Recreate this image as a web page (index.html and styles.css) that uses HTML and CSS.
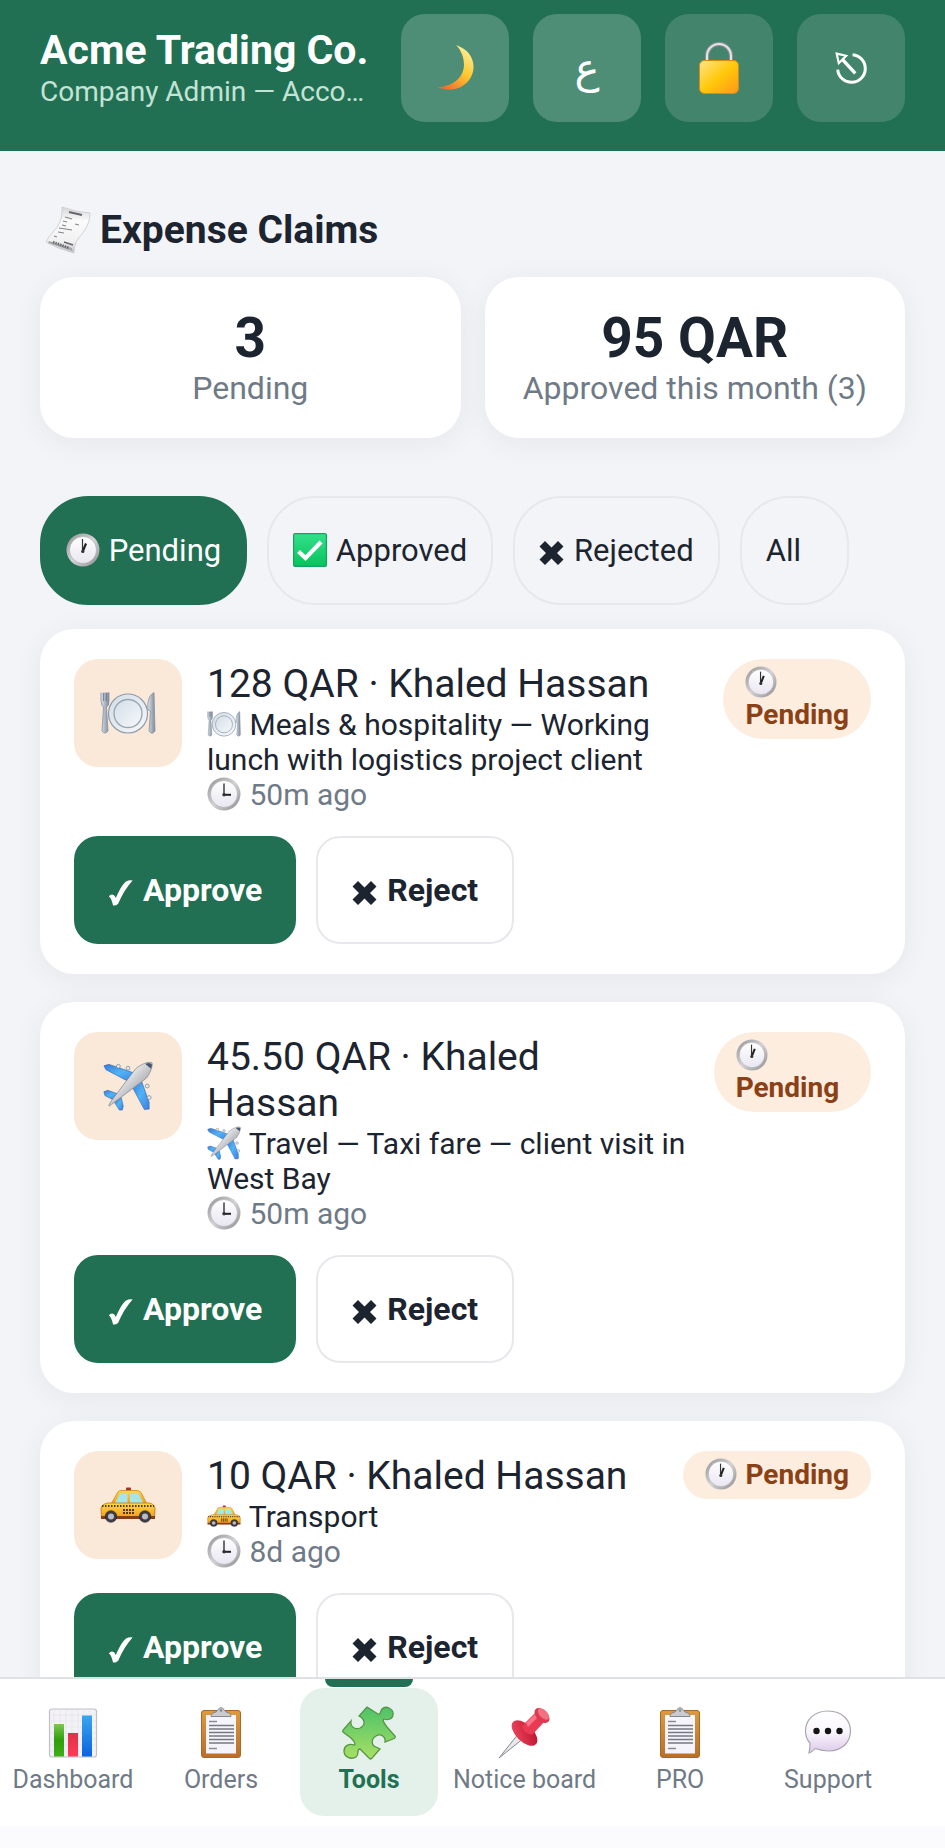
FILE: index.html
```html
<!DOCTYPE html>
<html lang="en">
<head>
<meta charset="utf-8">
<meta name="viewport" content="width=device-width, initial-scale=1">
<title>Expense Claims</title>
<link rel="stylesheet" href="styles.css">
</head>
<body>
<svg class="sprite" aria-hidden="true">
  <defs>
    <linearGradient id="g-moon" x1="0.8" y1="0" x2="0.2" y2="1"><stop offset="0" stop-color="#fff3a0"/><stop offset="0.5" stop-color="#fdc62d"/><stop offset="1" stop-color="#ee6a2c"/></linearGradient>
    <linearGradient id="g-lock" x1="0" y1="0" x2="1" y2="1"><stop offset="0" stop-color="#ffe48a"/><stop offset="0.5" stop-color="#ffc90a"/><stop offset="1" stop-color="#ff9518"/></linearGradient>
    <linearGradient id="g-paper" x1="0" y1="0" x2="0" y2="1"><stop offset="0" stop-color="#d6d6d9"/><stop offset="0.3" stop-color="#fbfbfb"/><stop offset="0.75" stop-color="#f1f1f2"/><stop offset="1" stop-color="#c3c3c8"/></linearGradient>
    <linearGradient id="g-rim" x1="0" y1="0" x2="1" y2="1"><stop offset="0" stop-color="#8f8f92"/><stop offset="0.5" stop-color="#d4d4d6"/><stop offset="1" stop-color="#8a8a8d"/></linearGradient>
    <linearGradient id="g-face" x1="0" y1="0" x2="0" y2="1"><stop offset="0" stop-color="#ffffff"/><stop offset="1" stop-color="#e9e6f1"/></linearGradient>
    <linearGradient id="g-check" x1="0" y1="0" x2="0" y2="1"><stop offset="0" stop-color="#35e08a"/><stop offset="1" stop-color="#05c45c"/></linearGradient>
    <linearGradient id="g-steel" x1="0" y1="0" x2="1" y2="0"><stop offset="0" stop-color="#dde3ea"/><stop offset="1" stop-color="#7d8998"/></linearGradient>
    <linearGradient id="g-plate" x1="0" y1="0" x2="1" y2="1"><stop offset="0" stop-color="#d3dde7"/><stop offset="1" stop-color="#f7f9fb"/></linearGradient>
    <linearGradient id="g-wing" x1="0" y1="0" x2="1" y2="1"><stop offset="0" stop-color="#3b78d8"/><stop offset="0.5" stop-color="#4fb4f7"/><stop offset="1" stop-color="#3f7ee0"/></linearGradient>
    <linearGradient id="g-body" x1="0" y1="0" x2="1" y2="1"><stop offset="0.3" stop-color="#f4f4f5"/><stop offset="0.7" stop-color="#a5a7ad"/></linearGradient>
    <linearGradient id="g-taxi" x1="0" y1="0" x2="0" y2="1"><stop offset="0" stop-color="#ffd84a"/><stop offset="1" stop-color="#f39a1a"/></linearGradient>
    <linearGradient id="g-puzzle" x1="0" y1="0" x2="0" y2="1"><stop offset="0" stop-color="#4cc268"/><stop offset="1" stop-color="#a9e064"/></linearGradient>
    <linearGradient id="g-pin" x1="0" y1="0" x2="1" y2="1"><stop offset="0" stop-color="#f24a60"/><stop offset="1" stop-color="#b80f2c"/></linearGradient>
    <linearGradient id="g-board" x1="0" y1="0" x2="0" y2="1"><stop offset="0" stop-color="#dd9a3e"/><stop offset="1" stop-color="#b96e2c"/></linearGradient>
    <linearGradient id="g-bubble" x1="0" y1="0" x2="0" y2="1"><stop offset="0" stop-color="#ffffff"/><stop offset="0.5" stop-color="#faf6fc"/><stop offset="1" stop-color="#dcc9ea"/></linearGradient>
    <linearGradient id="g-green" x1="0" y1="0" x2="0" y2="1"><stop offset="0" stop-color="#7cc653"/><stop offset="0.5" stop-color="#2f9e0b"/><stop offset="1" stop-color="#3fae18"/></linearGradient>
    <linearGradient id="g-red" x1="0" y1="0" x2="0" y2="1"><stop offset="0" stop-color="#e03048"/><stop offset="1" stop-color="#ff3b57"/></linearGradient>
    <linearGradient id="g-blue" x1="0" y1="0" x2="0" y2="1"><stop offset="0" stop-color="#3aa6ee"/><stop offset="1" stop-color="#0a63e0"/></linearGradient>
  </defs>

  <symbol id="i-moon" viewBox="0 0 48 48"><path d="M25 1C37 5 43 14 42.500 24C41.500 40 24 51 6 43C20 43 32.500 35 33 21C33 13 30 6 25 1Z" fill="url(#g-moon)"/></symbol>

  <symbol id="i-lock" viewBox="0 0 48 54"><path d="M12 20V15a12 12 0 0 1 24 0V20" fill="none" stroke="#8f9194" stroke-width="4"/><path d="M12 20V15a12 12 0 0 1 24 0V20" fill="none" stroke="#e2e3e5" stroke-width="2"/><rect x="4.500" y="19.500" width="39" height="33" rx="5" fill="url(#g-lock)" stroke="#d98a10"/></symbol>

  <symbol id="i-exit" viewBox="0 0 32 32"><path d="M17.500 3.500A13 13 0 1 1 3.500 17.500" fill="none" stroke="#fff" stroke-width="2.800"/><path d="M20 21L7 7" stroke="#fff" stroke-width="3.200" fill="none"/><path d="M2.500 2.500L11.500 4.500L4.500 11.500Z" fill="#42856c" stroke="#fff" stroke-width="2"/></symbol>

  <symbol id="i-receipt" viewBox="0 0 46 48"><path d="M17 1Q30 6 45 7C45 18 39 26 33 33C30 37 29 42 29 47Q13 43 1 36C4 28 12 24 15 16C17 11 17 6 17 1Z" fill="url(#g-paper)" stroke="#c9c9cd" stroke-width="0.800"/><path d="M24 6L37 9" stroke="#66676d" stroke-width="2.200"/><path d="M20 11L27 13M18 15L22 16M30 18L34 19M17 19L21 20M14 22L27 24M13 26L19 27M9 30L12 31" stroke="#85868c" stroke-width="1.200"/><path d="M19 36L28 39" stroke="#66676d" stroke-width="1.500"/><path d="M4 35L27 42L27.500 45L3 37Z" fill="#a6a6ad"/><path d="M8 36L24 42" stroke="#6a6a71" stroke-width="2.600" stroke-dasharray="1.500 1"/></symbol>

  <symbol id="i-clock1" viewBox="0 0 34 34"><circle cx="17" cy="17" r="16.500" fill="url(#g-rim)"/><circle cx="17" cy="17" r="13.500" fill="url(#g-face)" stroke="#a6a6aa" stroke-width="0.600"/><path d="M16.500 18.500V6" stroke="#333" stroke-width="1.200"/><path d="M16.500 19L20 10.500" stroke="#222" stroke-width="2.200"/><circle cx="16.800" cy="18.500" r="1.600" fill="#333"/></symbol>

  <symbol id="i-clock3" viewBox="0 0 34 34"><circle cx="17" cy="17" r="16.500" fill="url(#g-rim)"/><circle cx="17" cy="17" r="13.500" fill="url(#g-face)" stroke="#a6a6aa" stroke-width="0.600"/><path d="M17 18V6.500" stroke="#222" stroke-width="1.300"/><path d="M16.500 17.800H24" stroke="#222" stroke-width="2"/><circle cx="17" cy="17.800" r="1.700" fill="#333"/></symbol>

  <symbol id="i-approved" viewBox="0 0 34 34"><rect x="0.600" y="0.600" width="32.800" height="32.800" rx="1.500" fill="url(#g-check)" stroke="#12a463" stroke-width="1.200"/><path d="M5.500 18.500L12.500 25L28 9" fill="none" stroke="#fff" stroke-width="4.200"/></symbol>

  <symbol id="i-cross" viewBox="0 0 25 25"><path d="M6 0.500L12.500 7L19 0.500L24.500 6L18 12.500L24.500 19L19 24.500L12.500 18L6 24.500L0.500 19L7 12.500L0.500 6Z" fill="currentColor"/></symbol>

  <symbol id="i-tick" viewBox="0 0 26 28"><path d="M0.500 17.500Q3 14.500 6 16.500Q7.500 18 8 19.500C11.500 11 15 4.500 19 1.500Q22 0 26 0.500C20 7 14.500 16 10.500 25.500Q8 28 5 27.500C4 23 3 20 0.500 17.500Z" fill="currentColor"/></symbol>

  <symbol id="i-meal" viewBox="0 0 56 44"><circle cx="28" cy="22.500" r="19.500" fill="url(#g-plate)" stroke="#8f9caa" stroke-width="1.200"/><circle cx="28" cy="22.500" r="14" fill="url(#g-plate)" stroke="#9aa7b4" stroke-width="1.400"/><path d="M1 1.500V10Q1.500 15 3.500 16L2 40Q5 44 8 40L6.500 16Q9 15 9 10V1.500" fill="url(#g-steel)" stroke="#8592a1" stroke-width="0.800"/><path d="M3.600 2V10M6.300 2V10" stroke="#66778a" stroke-width="0.900"/><path d="M54 1.500C49 4 47 11 48 19L50.500 20L49 40Q52 44.500 55 40Z" fill="url(#g-steel)" stroke="#8592a1" stroke-width="0.800"/></symbol>

  <symbol id="i-plane" viewBox="0 0 52 52"><g fill="url(#g-wing)" stroke="#2c5ca8" stroke-width="0.600"><path d="M1 5L6 3.500L34 13L26 21L3 9Z"/><path d="M48 50L43 50.500L31 28L39 18L48 43Z"/><path d="M1 32L5 30.500L15 34L10 40L2 36Z"/><path d="M20 51L17 51L12 43L19 38L21 47Z"/></g><g fill="#e8eaee" stroke="#6f7b8c" stroke-width="0.700"><circle cx="16" cy="5.500" r="2"/><circle cx="26" cy="7.500" r="2"/><circle cx="46" cy="26" r="2"/><circle cx="48" cy="38" r="2"/></g><path d="M51 2C52 5 49 13 45 18L9 45Q6 48 6 46L9 41L34 8C40 3 48 0 51 2Z" fill="url(#g-body)" stroke="#85888f" stroke-width="0.800"/><path d="M44 3L50 8L51 4Q49 1 44 3Z" fill="#45556e"/></symbol>

  <symbol id="i-taxi" viewBox="0 0 56 36"><rect x="26" y="0.500" width="5" height="4" rx="1" fill="#a3322c"/><path d="M11 17L18 5Q19 3.500 21 3.500H37Q39 3.500 41 5.500L47 17Z" fill="url(#g-taxi)" stroke="#c88a1c" stroke-width="0.800"/><path d="M15 16L20 6.500H27.500V16ZM30 6.500H38L43.500 16H30Z" fill="#a5e6ea"/><path d="M1 21Q2 17 8 16H49Q55 17 55 22L54.500 31H1.500Z" fill="url(#g-taxi)" stroke="#b97518" stroke-width="0.800"/><path d="M2 19H54" stroke="#4b3a10" stroke-width="2" stroke-dasharray="1.500 1.500"/><path d="M1 29H55V32H1Z" fill="#8c3a1c"/><path d="M23 23H34M23 26H34" stroke="#5a3510" stroke-width="2" stroke-dasharray="2 1"/><g fill="#3c3d42" stroke="#222" stroke-width="0.600"><circle cx="11" cy="29.500" r="5.800"/><circle cx="45" cy="29.500" r="5.800"/></g><g fill="#b9bcc4"><circle cx="11" cy="29.500" r="3"/><circle cx="45" cy="29.500" r="3"/></g></symbol>

  <symbol id="i-chart" viewBox="0 0 54 54"><rect x="3.500" y="3" width="47" height="48" rx="2.500" fill="#f3f3f7" stroke="#bfc1ca" stroke-width="1.200"/><path d="M8 4V50M14 4V50M20 4V50M26 4V50M32 4V50M38 4V50M44 4V50M4 9H50M4 15H50M4 21H50M4 27H50M4 33H50M4 39H50M4 45H50" stroke="#e2e3ea" stroke-width="0.700"/><rect x="8" y="18" width="10" height="32.500" fill="url(#g-green)"/><rect x="22" y="27" width="10" height="23.500" fill="url(#g-red)"/><rect x="36" y="9.500" width="10" height="41" fill="url(#g-blue)"/></symbol>

  <symbol id="i-clipboard" viewBox="0 0 54 54"><rect x="7.500" y="4.500" width="39" height="47" rx="2.500" fill="url(#g-board)" stroke="#a8682a"/><rect x="12" y="9" width="30" height="38.500" fill="#f4f4fa"/><path d="M15 15.500H23M15 42.500H23" stroke="#8b8b94" stroke-width="1.400"/><path d="M15 19.500H40M15 23H40M15 26.500H40M15 30H40M15 33.500H40M15 37H40" stroke="#777784" stroke-width="1.700"/><path d="M17 10.500Q17 7 22 6L24 3.500Q27 0 30 3.500L32 6Q37 7 37 10.500Z" fill="#c9cbce" stroke="#85888c"/><circle cx="27" cy="4.500" r="1.300" fill="#85888c"/></symbol>

  <symbol id="i-puzzle" viewBox="0 0 54 54"><path d="M25 1L36 8C39 9 38 5 40 3C44 -1 52 3 51 9C50 14 45 14 42 13C40 14 42 17 45 21L53 30Q54 32 51 33L43 36C44 31 39 27 34 30C29 33 29 39 34 41L38 43L30 52Q29 54 27 52L18 43C14 43 18 48 14 51C9 54 2 51 2 45C2 40 7 37 12 39C15 39 11 34 9 32L1 26Q0 25 2 23L9 15C8 20 12 24 18 22C24 19 23 13 17 10Z" fill="url(#g-puzzle)" stroke="#579443" stroke-width="1.300"/></symbol>

  <symbol id="i-pin" viewBox="0 0 54 54"><path d="M1 52L21 27L26 32Z" fill="#e7e9ec" stroke="#85888e" stroke-width="1"/><ellipse cx="26.500" cy="27" rx="8.500" ry="16" transform="rotate(-45 26.500 27)" fill="url(#g-pin)"/><path d="M24 20L38 6L47 15L34 29Q26 28 24 20Z" fill="#e83a52"/><path d="M28 17L39 6L42 9L30 21Z" fill="#ff7383"/><ellipse cx="44" cy="9.500" rx="5.500" ry="9" transform="rotate(-45 44 9.500)" fill="#dc3a50"/><ellipse cx="45.500" cy="8" rx="3.800" ry="7" transform="rotate(-45 45.500 8)" fill="#f2707f"/></symbol>

  <symbol id="i-chat" viewBox="0 0 54 54"><path d="M27 5C42 5 49.500 15 49.500 25C49.500 37 40 45 28 45C22 45 17 43.500 14 42.500C12 45 10 46.500 8 47C9 43 9 40 9 37C6 34 4.500 30 4.500 25C4.500 14 13 5 27 5Z" fill="url(#g-bubble)" stroke="#aaa6ae" stroke-width="1.200"/><g fill="#151515"><circle cx="15.500" cy="25" r="3.200"/><circle cx="27" cy="25" r="3.200"/><circle cx="38.500" cy="25" r="3.200"/></g></symbol>
</svg>

<header class="topbar">
  <div class="identity">
    <div class="company">Acme Trading Co.</div>
    <div class="role">Company Admin — Accounts</div>
  </div>
  <button class="tool tool-light" type="button" aria-label="Dark mode"><svg class="icon-moon"><use href="#i-moon"/></svg></button>
  <button class="tool tool-light tool-lang" type="button" lang="ar">ع</button>
  <button class="tool" type="button" aria-label="Change password"><svg class="icon-lock"><use href="#i-lock"/></svg></button>
  <button class="tool" type="button" aria-label="Sign out"><svg class="icon-exit"><use href="#i-exit"/></svg></button>
</header>

<main class="content">
  <h1 class="title"><svg class="icon-title" aria-hidden="true"><use href="#i-receipt"/></svg>Expense Claims</h1>

  <section class="stats">
    <div class="stat"><div class="stat-value">3</div><div class="stat-label">Pending</div></div>
    <div class="stat"><div class="stat-value">95 QAR</div><div class="stat-label">Approved this month (3)</div></div>
  </section>

  <div class="chips">
    <button class="chip chip-on" type="button"><svg class="emoji"><use href="#i-clock1"/></svg> Pending</button>
    <button class="chip" type="button"><svg class="emoji"><use href="#i-approved"/></svg> Approved</button>
    <button class="chip" type="button"><svg class="mark"><use href="#i-cross"/></svg> Rejected</button>
    <button class="chip" type="button">All</button>
  </div>

  <section class="claims">
    <article class="claim">
      <div class="claim-top">
        <div class="tile"><svg class="tile-icon"><use href="#i-meal"/></svg></div>
        <div class="claim-body">
          <h2 class="claim-title">128 QAR · Khaled Hassan</h2>
          <p class="claim-line"><svg class="emoji"><use href="#i-meal"/></svg> Meals &amp; hospitality — Working lunch with logistics project client</p>
          <p class="claim-line claim-time"><svg class="emoji"><use href="#i-clock3"/></svg> 50m ago</p>
        </div>
        <span class="badge"><svg class="emoji"><use href="#i-clock1"/></svg> Pending</span>
      </div>
      <div class="actions">
        <button class="btn btn-main" type="button"><svg class="mark"><use href="#i-tick"/></svg> Approve</button>
        <button class="btn" type="button"><svg class="mark"><use href="#i-cross"/></svg> Reject</button>
      </div>
    </article>

    <article class="claim">
      <div class="claim-top">
        <div class="tile"><svg class="tile-icon"><use href="#i-plane"/></svg></div>
        <div class="claim-body">
          <h2 class="claim-title">45.50 QAR · Khaled Hassan</h2>
          <p class="claim-line"><svg class="emoji"><use href="#i-plane"/></svg> Travel — Taxi fare — client visit in West Bay</p>
          <p class="claim-line claim-time"><svg class="emoji"><use href="#i-clock3"/></svg> 50m ago</p>
        </div>
        <span class="badge"><svg class="emoji"><use href="#i-clock1"/></svg> Pending</span>
      </div>
      <div class="actions">
        <button class="btn btn-main" type="button"><svg class="mark"><use href="#i-tick"/></svg> Approve</button>
        <button class="btn" type="button"><svg class="mark"><use href="#i-cross"/></svg> Reject</button>
      </div>
    </article>

    <article class="claim">
      <div class="claim-top">
        <div class="tile"><svg class="tile-icon"><use href="#i-taxi"/></svg></div>
        <div class="claim-body">
          <h2 class="claim-title">10 QAR · Khaled Hassan</h2>
          <p class="claim-line"><svg class="emoji"><use href="#i-taxi"/></svg> Transport</p>
          <p class="claim-line claim-time"><svg class="emoji"><use href="#i-clock3"/></svg> 8d ago</p>
        </div>
        <span class="badge"><svg class="emoji"><use href="#i-clock1"/></svg> Pending</span>
      </div>
      <div class="actions">
        <button class="btn btn-main" type="button"><svg class="mark"><use href="#i-tick"/></svg> Approve</button>
        <button class="btn" type="button"><svg class="mark"><use href="#i-cross"/></svg> Reject</button>
      </div>
    </article>
  </section>
</main>

<nav class="tabs">
  <a class="tab" href="#dashboard"><svg class="tab-icon"><use href="#i-chart"/></svg>Dashboard</a>
  <a class="tab" href="#orders"><svg class="tab-icon"><use href="#i-clipboard"/></svg>Orders</a>
  <a class="tab tab-on" href="#tools" aria-current="page"><svg class="tab-icon"><use href="#i-puzzle"/></svg>Tools</a>
  <a class="tab" href="#notices"><svg class="tab-icon"><use href="#i-pin"/></svg>Notice board</a>
  <a class="tab" href="#pro"><svg class="tab-icon"><use href="#i-clipboard"/></svg>PRO</a>
  <a class="tab" href="#support"><svg class="tab-icon"><use href="#i-chat"/></svg>Support</a>
</nav>
</body>
</html>
```

FILE: styles.css
```css
:root {
  --green: #217054;
  --ink: #1c2430;
  --muted: #6f7a87;
  --line: #e6e8ec;
  --page: #f3f4f7;
}

* {
  box-sizing: border-box;
}

body {
  margin: 0;
  height: 100vh;
  padding-bottom: 22px;
  display: flex;
  flex-direction: column;
  background: #fbfbfd;
  color: var(--ink);
  font-family: Roboto, "DejaVu Sans", sans-serif;
  font-size: 30px;
}

button {
  font: inherit;
  color: inherit;
  border: 0;
  margin: 0;
  cursor: pointer;
}

h1, h2, p {
  margin: 0;
}

.sprite {
  position: absolute;
  width: 0;
  height: 0;
}

/* Header */
.topbar {
  flex: none;
  display: flex;
  align-items: center;
  gap: 24px;
  padding: 14px 40px 29px;
  background: var(--green);
  color: #fff;
}

.identity {
  flex: 1;
  min-width: 0;
}

.company,
.role {
  white-space: nowrap;
  overflow: hidden;
  text-overflow: ellipsis;
}

.company {
  font-size: 41px;
  font-weight: 700;
  line-height: 48px;
}

.role {
  font-size: 28px;
  line-height: 36px;
  color: #c5e3d5;
}

.tool {
  flex: none;
  display: flex;
  align-items: center;
  justify-content: center;
  width: 108px;
  height: 108px;
  padding: 0;
  border-radius: 24px;
  background: #42856c;
}

.tool-light {
  background: #4e8d76;
}

.tool-lang {
  font-family: "DejaVu Sans", sans-serif;
  font-size: 42px;
}

.icon-moon {
  width: 48px;
  height: 48px;
}

.icon-lock {
  width: 48px;
  height: 54px;
}

.icon-exit {
  width: 34px;
  height: 34px;
}

/* Page */
.content {
  flex: 1;
  min-height: 0;
  overflow: hidden;
  padding: 55px 40px 0;
  background: var(--page);
}

.title {
  display: flex;
  align-items: center;
  gap: 9px;
  padding-left: 5px;
  margin-bottom: 23px;
  font-size: 39px;
  font-weight: 700;
  line-height: 48px;
}

.icon-title {
  width: 46px;
  height: 48px;
}

.stats {
  display: grid;
  grid-template-columns: 1fr 1fr;
  gap: 24px;
  margin-bottom: 58px;
}

.stat,
.claim {
  background: #fff;
  border-radius: 34px;
  box-shadow: 0 5px 30px rgba(20, 30, 60, 0.06);
}

.stat {
  padding: 29px 20px 31px;
  text-align: center;
}

.stat-value {
  font-size: 55px;
  font-weight: 700;
  line-height: 64px;
}

.stat-label {
  font-size: 32px;
  line-height: 37px;
  color: var(--muted);
}

.chips {
  display: flex;
  gap: 20px;
  margin-bottom: 24px;
}

.chip {
  min-width: 109px;
  height: 109px;
  padding: 0 24px;
  border: 2px solid var(--line);
  border-radius: 48px;
  background: transparent;
  font-size: 31px;
  text-align: left;
  white-space: nowrap;
}

.chip-on {
  background: var(--green);
  border-color: var(--green);
  color: #fff;
}

.emoji {
  width: 34px;
  height: 34px;
  margin: -6px 1px -6px 0;
  vertical-align: 0;
}

.mark {
  width: 25px;
  height: 26px;
  margin-right: 2px;
  vertical-align: -5px;
}

/* Claims */
.claims {
  display: flex;
  flex-direction: column;
  gap: 28px;
}

.claim {
  padding: 30px 34px;
}

.claim-top {
  display: flex;
  align-items: flex-start;
  gap: 25px;
  margin-bottom: 24px;
}

.tile {
  flex: none;
  display: flex;
  align-items: center;
  justify-content: center;
  width: 108px;
  height: 108px;
  border-radius: 24px;
  background: #fae8d8;
}

.tile-icon {
  width: 56px;
  height: 50px;
}

.claim-body {
  flex: 1 1 auto;
  min-width: 0;
  padding-top: 2px;
}

.claim-title {
  padding-right: 8px;
  font-size: 39px;
  font-weight: 400;
  line-height: 46px;
}

.claim-line {
  font-size: 30px;
  line-height: 35px;
}

.claim-time {
  color: var(--muted);
}

.badge {
  flex: 0 1 auto;
  padding: 8px 22px;
  border-radius: 40px;
  background: #fceddf;
  color: #8b4115;
  font-size: 28px;
  font-weight: 700;
  line-height: 32px;
}

.badge .emoji {
  width: 32px;
  height: 32px;
}

.actions {
  display: flex;
  gap: 20px;
}

.btn {
  height: 108px;
  padding: 0 34px;
  border: 2px solid var(--line);
  border-radius: 24px;
  background: #fff;
  font-size: 32px;
  font-weight: 700;
  white-space: nowrap;
}

.btn-main {
  padding: 0 32px;
  background: var(--green);
  border-color: var(--green);
  color: #fff;
}

/* Bottom tabs */
.tabs {
  flex: none;
  display: flex;
  gap: 10px;
  padding: 9px 4px 10px;
  border-top: 2px solid #dfe2e4;
  background: #fff;
}

.tab {
  position: relative;
  display: flex;
  flex-direction: column;
  align-items: center;
  gap: 4px;
  min-width: 138px;
  height: 128px;
  padding: 18px 5px 0;
  border-radius: 24px;
  color: var(--muted);
  font-size: 25px;
  line-height: 32px;
  text-decoration: none;
  white-space: nowrap;
}

.tab-icon {
  width: 54px;
  height: 54px;
}

.tab-on {
  background: #e4f1ea;
  color: var(--green);
  font-weight: 700;
}

.tab-on::before {
  content: "";
  position: absolute;
  top: -9px;
  left: 25px;
  right: 25px;
  height: 8px;
  border-radius: 0 0 8px 8px;
  background: var(--green);
}
```
